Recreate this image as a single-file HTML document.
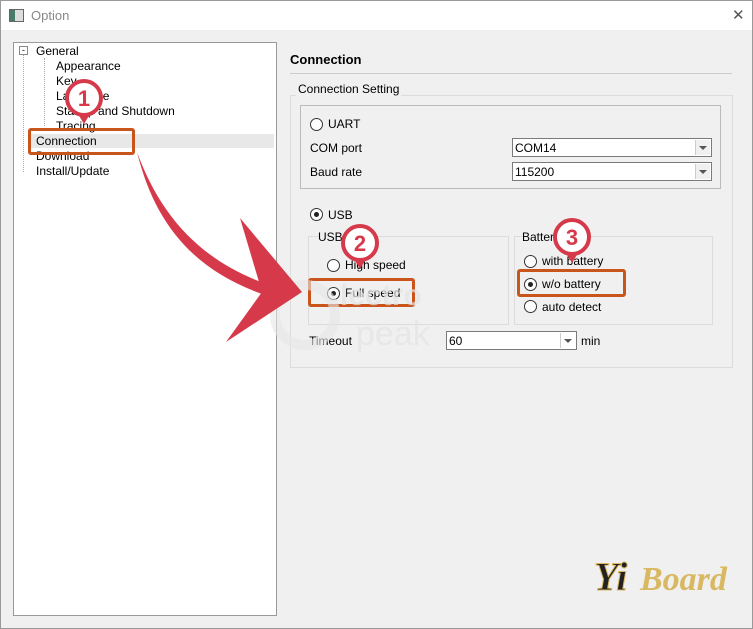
<!DOCTYPE html>
<html><head><style>
body{margin:0;width:753px;height:629px;background:#f0f0f0;font-family:"Liberation Sans",sans-serif;font-size:12px;color:#000;position:relative;overflow:hidden}
.a{position:absolute}
.t{position:absolute;white-space:nowrap}
.grp{position:absolute;border:1px solid #dcdcdc}
.rad{position:absolute;width:11px;height:11px;border:1px solid #333;border-radius:50%;background:#fff}
.rad.on::after{content:"";position:absolute;left:3px;top:3px;width:5px;height:5px;border-radius:50%;background:#222}
.cb{position:absolute;background:#fff;border:1px solid #7a7a7a;height:17px}
.cb span{position:absolute;left:2px;top:2px}
.cb i{position:absolute;right:1px;top:1px;width:14px;height:15px;background:#f0f0f0;border-left:1px solid #ccc}
.cb i::after{content:"";position:absolute;left:3px;top:6px;border-left:4px solid transparent;border-right:4px solid transparent;border-top:4px solid #555}
.ob{position:absolute;border:3px solid #c9541c;border-radius:3px}
</style></head><body>
<div class="a" style="left:0;top:0;width:752px;height:30px;background:#fff;border-bottom:1px solid #eee"></div>
<div class="a" style="left:9px;top:9px;width:13px;height:11px;border:1px solid #666;background:#ddd"><div style="width:5px;height:11px;background:#4a7a6a"></div></div>
<div class="t" style="left:31px;top:8px;color:#888;font-size:13px">Option</div>
<div class="t" style="left:732px;top:6px;color:#555;font-size:15px;font-weight:normal">✕</div>
<div class="a" style="left:0;top:0;width:751px;height:627px;border:1px solid #999"></div>

<div class="a" style="left:13px;top:42px;width:262px;height:572px;background:#fff;border:1px solid #999"></div>
<div class="a" style="left:28px;top:134px;width:246px;height:14px;background:#e8e8e8"></div>
<div class="a" style="left:19px;top:46px;width:7px;height:7px;border:1px solid #888;font-size:9px;line-height:6px;text-align:center">-</div>
<div class="a" style="left:23px;top:55px;height:117px;border-left:1px dotted #aaa"></div>
<div class="a" style="left:44px;top:58px;height:68px;border-left:1px dotted #aaa"></div>
<div class="t" style="left:36px;top:44px">General</div>
<div class="t" style="left:56px;top:59px">Appearance</div>
<div class="t" style="left:56px;top:74px">Key</div>
<div class="t" style="left:56px;top:89px">Language</div>
<div class="t" style="left:56px;top:104px">Startup and Shutdown</div>
<div class="t" style="left:56px;top:119px">Tracing</div>
<div class="t" style="left:36px;top:134px">Connection</div>
<div class="t" style="left:36px;top:149px">Download</div>
<div class="t" style="left:36px;top:164px">Install/Update</div>

<div class="t" style="left:290px;top:52px;font-weight:bold;font-size:13px">Connection</div>
<div class="a" style="left:290px;top:73px;width:442px;border-top:1px solid #ccc"></div>
<div class="grp" style="left:290px;top:95px;width:441px;height:271px"></div>
<div class="t" style="left:296px;top:82px;background:#f0f0f0;padding:0 2px">Connection Setting</div>
<div class="grp" style="left:300px;top:105px;width:419px;height:82px;border-color:#bbb"></div>
<div class="rad" style="left:310px;top:118px"></div><div class="t" style="left:328px;top:117px">UART</div>
<div class="t" style="left:310px;top:141px">COM port</div>
<div class="cb" style="left:512px;top:138px;width:198px"><span>COM14</span><i></i></div>
<div class="t" style="left:310px;top:165px">Baud rate</div>
<div class="cb" style="left:512px;top:162px;width:198px"><span>115200</span><i></i></div>
<div class="rad on" style="left:310px;top:208px"></div><div class="t" style="left:328px;top:208px">USB</div>
<div class="grp" style="left:308px;top:236px;width:199px;height:87px"></div>
<div class="t" style="left:318px;top:230px;background:#f0f0f0">USB</div>
<div class="rad" style="left:327px;top:259px"></div><div class="t" style="left:345px;top:258px">High speed</div>
<div class="rad on" style="left:327px;top:287px"></div><div class="t" style="left:345px;top:286px">Full speed</div>
<div class="grp" style="left:514px;top:236px;width:197px;height:87px"></div>
<div class="t" style="left:522px;top:230px;background:#f0f0f0">Battery</div>
<div class="rad" style="left:524px;top:255px"></div><div class="t" style="left:542px;top:254px">with battery</div>
<div class="rad on" style="left:524px;top:278px"></div><div class="t" style="left:542px;top:277px">w/o battery</div>
<div class="rad" style="left:524px;top:300px"></div><div class="t" style="left:542px;top:300px">auto detect</div>
<div class="t" style="left:309px;top:334px">Timeout</div>
<div class="cb" style="left:446px;top:331px;width:129px"><span>60</span><i style="background:#fff"></i></div>
<div class="t" style="left:581px;top:334px">min</div>

<div class="ob" style="left:28px;top:128px;width:101px;height:21px"></div>
<div class="ob" style="left:308px;top:278px;width:101px;height:23px"></div>
<div class="ob" style="left:517px;top:269px;width:103px;height:22px"></div>

<svg class="a" style="left:0;top:0" width="753" height="629">
<text x="340" y="305" font-family="Liberation Sans" font-size="30" font-weight="bold" fill="#e4e4e4" opacity="0.7">lectro</text>
<text x="356" y="345" font-family="Liberation Sans" font-size="34" fill="#e4e4e4" opacity="0.7">peak</text>
<circle cx="305" cy="315" r="30" fill="none" stroke="#e6e6e6" stroke-width="10" opacity="0.6"/>
<g fill="#d63a4a">
<path d="M137 152 C160 215 200 262 272 286 L268 296 C195 272 155 225 137 152Z"/>
<path d="M240 218 L302 292 L226 342 L262 292Z"/>
</g>
<g fill="#fff" stroke="#d63a4a" stroke-width="4">
<circle cx="84" cy="98" r="17"/><circle cx="360" cy="243" r="17"/><circle cx="572" cy="237" r="17"/>
</g>
<g fill="#d63a4a">
<path d="M78 114 L84 124 L90 114Z"/><path d="M354 259 L360 269 L366 259Z"/><path d="M566 253 L572 263 L578 253Z"/>
</g>
<g font-family="Liberation Sans" font-weight="bold" font-size="22" fill="#d63a4a" text-anchor="middle">
<text x="84" y="106">1</text><text x="360" y="251">2</text><text x="572" y="245">3</text></g>
<g font-family="Liberation Serif" font-style="italic" font-weight="bold" font-size="40">
<text x="594" y="590" fill="#222" stroke="#d8b860" stroke-width="1">Yi</text><text x="640" y="590" fill="#d8b860" font-size="34">Board</text></g>
</svg>
</body></html>
